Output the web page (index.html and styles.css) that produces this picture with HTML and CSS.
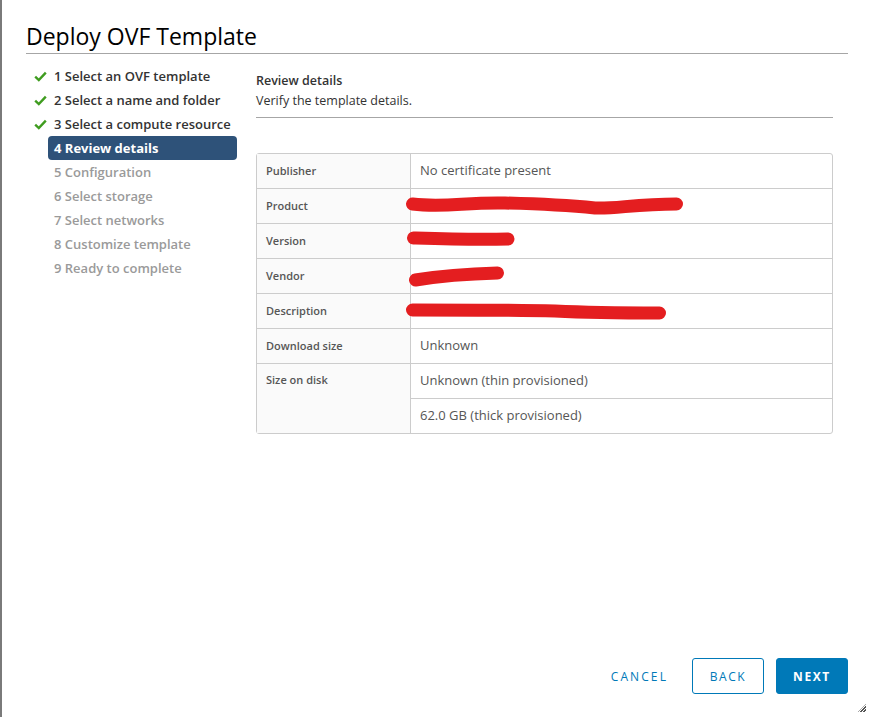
FILE: index.html
```html
<!DOCTYPE html>
<html lang="en">

<head>
  <meta charset="UTF-8">
  <title>Deploy OVF Template</title>
  <link rel="stylesheet" href="styles.css">
</head>

<body>
  <div class="dialog">
    <div class="dialog-header">
      <h1>Deploy OVF Template</h1>
    </div>

    <div class="dialog-body">
      <!-- Wizard steps -->
      <ul class="steps">
        <li class="step done">
          <svg class="check" width="13" height="11" viewBox="0 0 13 11"><path d="M1.2 5.6 L4.8 9 L11.8 1.6" fill="none" stroke="#3f9c1f" stroke-width="2.4"/></svg>
          1 Select an OVF template
        </li>
        <li class="step done">
          <svg class="check" width="13" height="11" viewBox="0 0 13 11"><path d="M1.2 5.6 L4.8 9 L11.8 1.6" fill="none" stroke="#3f9c1f" stroke-width="2.4"/></svg>
          2 Select a name and folder
        </li>
        <li class="step done">
          <svg class="check" width="13" height="11" viewBox="0 0 13 11"><path d="M1.2 5.6 L4.8 9 L11.8 1.6" fill="none" stroke="#3f9c1f" stroke-width="2.4"/></svg>
          3 Select a compute resource
        </li>
        <li class="step active">4 Review details</li>
        <li class="step">5 Configuration</li>
        <li class="step">6 Select storage</li>
        <li class="step">7 Select networks</li>
        <li class="step">8 Customize template</li>
        <li class="step">9 Ready to complete</li>
      </ul>

      <div class="content">
        <div class="content-header">
          <h2>Review details</h2>
          <p>Verify the template details.</p>
        </div>

        <table class="details">
          <tr>
            <th>Publisher</th>
            <td>No certificate present</td>
          </tr>
          <tr>
            <th>Product</th>
            <td class="hidden-value">
              <svg width="290" height="20" viewBox="0 0 290 20"><path d="M7.5 8 C40 12 60 6 100 7 C140 8 160 9 190 12 C210 13 230 8 271.5 8" fill="none" stroke="#e41e20" stroke-width="13" stroke-linecap="round"/></svg>
            </td>
          </tr>
          <tr>
            <th>Version</th>
            <td class="hidden-value">
              <svg width="120" height="20" viewBox="0 0 120 20"><path d="M8.5 7 C40 8 70 9 103 8" fill="none" stroke="#e41e20" stroke-width="13" stroke-linecap="round"/></svg>
            </td>
          </tr>
          <tr>
            <th>Vendor</th>
            <td class="hidden-value">
              <svg width="120" height="22" viewBox="0 0 120 22"><path d="M10.5 15 C35 11 55 9 92.5 8" fill="none" stroke="#e41e20" stroke-width="13" stroke-linecap="round"/></svg>
            </td>
          </tr>
          <tr>
            <th>Description</th>
            <td class="hidden-value">
              <svg width="280" height="20" viewBox="0 0 280 20"><path d="M7.5 9 C60 9 110 9 150 10 C190 12 220 12 254.5 12" fill="none" stroke="#e41e20" stroke-width="13" stroke-linecap="round"/></svg>
            </td>
          </tr>
          <tr>
            <th>Download size</th>
            <td>Unknown</td>
          </tr>
          <tr>
            <th rowspan="2" class="top">Size on disk</th>
            <td>Unknown (thin provisioned)</td>
          </tr>
          <tr>
            <td>62.0 GB (thick provisioned)</td>
          </tr>
        </table>
      </div>
    </div>

    <div class="dialog-footer">
      <button class="btn btn-link">Cancel</button>
      <button class="btn btn-outline">Back</button>
      <button class="btn btn-primary">Next</button>
    </div>

    <div class="resize-grip"></div>
  </div>
</body>

</html>
```

FILE: styles.css
```css
html, body {
  height: 100%;
}

body {
  margin: 0;
  padding: 0;
  background-color: white;
  font-family: "Open Sans", Arial, sans-serif;
  color: #333;
}

.dialog {
  position: relative;
  height: 100%;
  box-sizing: border-box;
  border-left: 2px solid #7a7a7a;
  display: flex;
  flex-direction: column;
}

.dialog-header {
  margin: 0 22px 0 24px;
  padding-top: 19px;
  border-bottom: 1px solid #a6a6a6;
}

.dialog-header h1 {
  margin: 0;
  font-size: 23px;
  font-weight: 400;
  line-height: 34px;
  color: #000;
}

.dialog-body {
  flex: 1;
  display: flex;
  padding-top: 10px;
}

.steps {
  list-style: none;
  margin: 0;
  padding: 0 0 0 30px;
  width: 224px;
}

.step {
  position: relative;
  height: 24px;
  line-height: 24px;
  padding-left: 22px;
  font-size: 13px;
  font-weight: 600;
  color: #9a9a9a;
  white-space: nowrap;
}

.step.done {
  color: #333;
}

.step .check {
  position: absolute;
  left: 2px;
  top: 7px;
}

.step.active {
  margin-left: 16px;
  padding-left: 6px;
  width: 183px;
  background-color: #2e5279;
  color: white;
  font-weight: 700;
  border-radius: 4px;
}

.content {
  width: 577px;
  padding-top: 7px;
}

.content-header {
  border-bottom: 1px solid #a6a6a6;
  padding-bottom: 6px;
  margin-bottom: 35px;
}

.content-header h2 {
  margin: 0;
  font-size: 12.5px;
  font-weight: 600;
  line-height: 20px;
  color: #333;
}

.content-header p {
  margin: 0;
  font-size: 12.5px;
  line-height: 20px;
  color: #333;
}

.details {
  width: 100%;
  border-collapse: separate;
  border-spacing: 0;
  border: 1px solid #cccccc;
  border-radius: 3px;
}

.details th,
.details td {
  height: 35px;
  padding: 0 9px 2px;
  box-sizing: border-box;
  text-align: left;
  vertical-align: middle;
  border-bottom: 1px solid #cccccc;
}

.details tr:last-child td {
  border-bottom: none;
  height: 34px;
}

.details th {
  width: 154px;
  background-color: #fafafa;
  border-right: 1px solid #cccccc;
  font-size: 11px;
  font-weight: 600;
  color: #565656;
}

.details th.top {
  vertical-align: top;
  padding-top: 8px;
  border-bottom: none;
}

.details td {
  font-size: 13px;
  color: #565656;
}

.details td.hidden-value {
  padding: 0;
}

.details td.hidden-value svg {
  display: block;
  margin-left: -6px;
}

.dialog-footer {
  display: flex;
  justify-content: flex-end;
  align-items: center;
  gap: 12px;
  padding: 0 22px 23px 0;
}

.btn {
  height: 36px;
  padding: 0 16px;
  font-family: "Open Sans", Arial, sans-serif;
  font-size: 12px;
  font-weight: 600;
  letter-spacing: 1.6px;
  text-transform: uppercase;
  border-radius: 3px;
  cursor: pointer;
}

.btn-link {
  border: none;
  background: none;
  color: #0079b8;
  font-weight: 400;
  letter-spacing: 2.1px;
  padding-right: 12px;
}

.btn-outline {
  border: 1px solid #0079b8;
  background-color: white;
  color: #0079b8;
  font-weight: 400;
  width: 72px;
}

.btn-primary {
  border: 1px solid #0079b8;
  background-color: #0079b8;
  color: white;
  font-weight: 700;
  width: 72px;
}

.resize-grip {
  position: absolute;
  right: 4px;
  bottom: 5px;
  width: 8px;
  height: 8px;
  background: repeating-linear-gradient(135deg, transparent 0 1px, #555 1px 2px);
  clip-path: polygon(100% 0, 100% 100%, 0 100%);
}
```
